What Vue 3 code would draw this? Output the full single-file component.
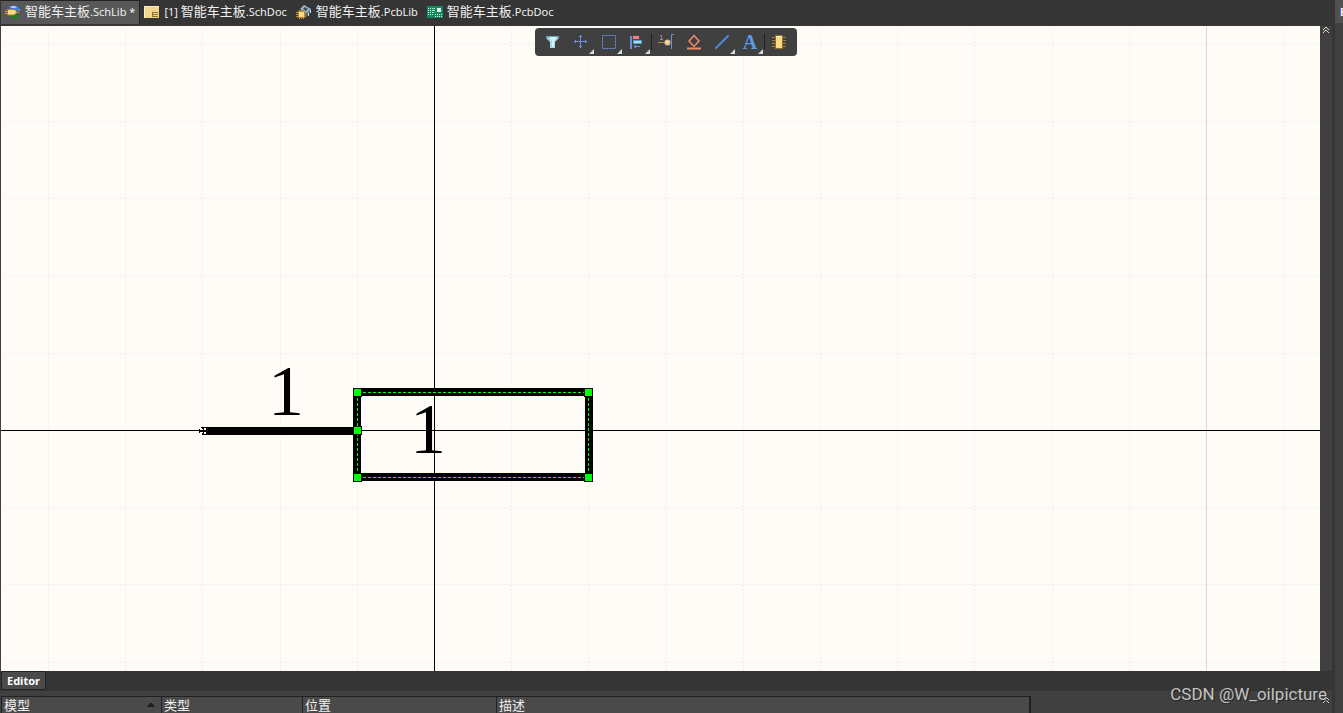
<script setup>
const tabs = [
  { icon: 'schlib', prefix: '', name: '智能车主板', ext: '.SchLib *', active: true },
  { icon: 'schdoc', prefix: '[1] ', name: '智能车主板', ext: '.SchDoc' },
  { icon: 'pcblib', prefix: '', name: '智能车主板', ext: '.PcbLib' },
  { icon: 'pcbdoc', prefix: '', name: '智能车主板', ext: '.PcbDoc' },
]

const tools = [
  { id: 'filter', label: 'Selection filter' },
  { id: 'move', label: 'Move', menu: true },
  { id: 'select', label: 'Select area', menu: true },
  { id: 'align', label: 'Align', menu: true, divider: true },
  { id: 'pin', label: 'Place pin' },
  { id: 'ieee', label: 'Place IEEE symbol' },
  { id: 'line', label: 'Place line', menu: true },
  { id: 'text', label: 'Place text', menu: true, divider: true },
  { id: 'part', label: 'Add part' },
]

const columns = [
  { key: 'model', label: '模型', sorted: true },
  { key: 'type', label: '类型' },
  { key: 'place', label: '位置' },
  { key: 'desc', label: '描述' },
]

// Grid lines relative to the sheet origin, 10 lines to 772 pixels
const pitch = 77.2
const steps = (from, to) =>
  Array.from({ length: to - from + 1 }, (_, i) => from + i).filter((n) => n !== 0 && n !== 10)
const gridX = steps(-5, 22).map((n) => Math.round(n * pitch))
const gridY = steps(-5, 12).map((n) => Math.round(n * pitch))

const handles = [
  [-77, -38],
  [-77, 0],
  [-77, 47],
  [154, -38],
  [154, 47],
]
</script>

<template>
  <div class="app">
    <main class="workspace">
      <nav class="tabs" aria-label="Documents">
        <button v-for="t in tabs" :key="t.icon" type="button" class="tab" :class="{ active: t.active }">
          <svg v-if="t.icon === 'schlib'" width="16" height="16" viewBox="0 0 16 16">
            <path d="M4 2h6q4 0 5 4l-1 1H5z" fill="#3f7fe0" />
            <path d="M6 2h4l2 2H6z" fill="#a9ceff" />
            <path d="M14 6h1" stroke="#a9ceff" />
            <path d="M6 10h7l1 3-1 1-1-1-1 3-2-2-2 1-2-2z" fill="#1f7a2b" />
            <path d="M2.500 5.500h6q3 0 3 2.500t-3 3h-6z" fill="#f6d98a" stroke="#a97f2c" />
            <path d="M0 7.500h2M0 9.500h2M12 8.500h2" stroke="#c9a24c" />
          </svg>
          <svg v-else-if="t.icon === 'schdoc'" width="16" height="16" viewBox="0 0 16 16">
            <rect x="0" y="2" width="15" height="12" fill="#f2d68b" />
            <path d="M0 2h15v1H0zM0 2h1v12H0z" fill="#fff0bf" />
            <path d="M8 8h6v5H8z" fill="#8f7034" />
            <path d="M9 9h5v1H9zM9 11h5v1H9z" fill="#f2d68b" />
          </svg>
          <svg v-else-if="t.icon === 'pcblib'" width="16" height="16" viewBox="0 0 16 16">
            <path d="M8 1l7 4-1 4-4 4-6-6z" fill="#516879" />
            <path d="M8 1l7 4-4 4-7-4z" fill="#9db2c2" />
            <path d="M9 3l3 2-2 2-3-2z" fill="#3c4e5c" />
            <path d="M12.500 9v3M14.500 6v3" stroke="#d5e2ea" />
            <path d="M0 8.500h10M0 10.500h10M0 12.500h10M3.500 6v9M5.500 6v9M7.500 6v9" stroke="#c19338" />
            <rect x="2.500" y="7.500" width="6" height="6" fill="#f8dc8c" stroke="#b98a2f" />
          </svg>
          <svg v-else width="16" height="16" viewBox="0 0 16 16">
            <rect x="0" y="2" width="16" height="12" fill="#0f8a58" />
            <path d="M1.500 4v1M1.500 6v1M1.500 8v1M1.500 10v1M3 4.500h1M3 6.500h1M3 8.500h1M3 10.500h1" stroke="#dff3e8" />
            <path d="M5 4.500h3M5 6.500h3M5 8.500h2M5 10.500h1" stroke="#a7dcc1" />
            <rect x="10" y="4" width="4" height="4" fill="#e6f4ec" />
            <path d="M8 10.500h1M10 10.500h1M12 10.500h1M14 10.500h1M8 12.500h1M10 12.500h1M12 12.500h1M14 12.500h1" stroke="#e6f4ec" />
          </svg>
          <span class="tab-text">{{ t.prefix }}<span class="cjk">{{ t.name }}</span>{{ t.ext }}</span>
        </button>
      </nav>

      <section class="middle">
        <div class="sheet">
          <svg class="drawing" role="img" aria-label="Symbol drawing">
            <g transform="translate(433 404)">
              <g transform="translate(0.5 0.5)">
                <g class="grid">
                  <line v-for="x in gridX" :key="'x' + x" :x1="x" :x2="x" y1="-401.5" y2="1000" />
                  <line v-for="y in gridY" :key="'y' + y" x1="-430.5" x2="1800" :y1="y" :y2="y" />
                </g>
                <line class="major" x1="772" x2="772" y1="-404" y2="1000" />
                <g class="axis">
                  <line x1="0" x2="0" y1="-500" y2="1000" />
                  <line x1="-500" x2="2000" y1="0" y2="0" />
                </g>
              </g>

              <rect class="bar" x="-232" y="-3" width="152" height="8" />
              <rect class="body" x="-77" y="-38" width="232" height="85" />
              <g class="guide" transform="translate(0.5 0.5)">
                <path d="M-77 -38H154M-77 47H154M-77 -38V47M154 -38V47" />
              </g>
              <g class="handles">
                <rect v-for="(h, i) in handles" :key="i" :x="h[0] - 4" :y="h[1] - 4" width="9" height="9" fill="#000" />
                <rect v-for="(h, i) in handles" :key="'g' + i" :x="h[0] - 3" :y="h[1] - 3" width="7" height="7" fill="#0f0" />
              </g>
              <path class="hotspot-dark" d="M-235 -1h1v4h-1zM-234 0h2v2h-2zM-233 -3h2v1h-2z" />
              <path class="hotspot" d="M-230 -2h2v2h-2zM-230 2h2v2h-2zM-232 -1h1v1h-1zM-232 2h1v1h-1z" />
              <text class="pin-text" x="-166" y="-15">1</text>
              <text class="pin-text" x="-24" y="23">1</text>
            </g>
          </svg>
        </div>
        <aside class="rail">
          <button type="button" class="chevron" aria-label="Collapse">
            <svg width="8" height="8" viewBox="0 0 8 8"><path d="M1 4l3-3 3 3M1 7l3-3 3 3" /></svg>
          </button>
        </aside>

        <div class="toolbar" role="toolbar" aria-label="Active bar">
          <button v-for="t in tools" :key="t.id" type="button" class="tool" :class="{ divider: t.divider }" :aria-label="t.label">
            <svg v-if="t.id === 'filter'" width="16" height="16" viewBox="0 0 16 16">
              <path d="M1 2h13v2l-4 4v6H5V8L1 4z" fill="#a9d7e8" />
              <path d="M1 2h13v2H1z" fill="#6ea3b8" /><path d="M4 3h8l-3 4v6H7V7z" fill="#d8f2fa" />
            </svg>
            <svg v-else-if="t.id === 'move'" width="16" height="16" viewBox="0 0 16 16" fill="none" stroke="#6a8fe0">
              <path d="M7.500 1v13M1 7.500h13M6 2.500h3M6 12.500h3M2.500 6v3M12.500 6v3" />
            </svg>
            <svg v-else-if="t.id === 'select'" width="16" height="16" viewBox="0 0 16 16">
              <rect x="1.500" y="1.500" width="13" height="13" fill="none" stroke="#6f92ea" stroke-dasharray="2 1" />
            </svg>
            <svg v-else-if="t.id === 'align'" width="16" height="16" viewBox="0 0 16 16">
              <path d="M1 2h2v13H1z" fill="#6a8fe0" />
              <path d="M4 2h6v3H4z" fill="#f08a8e" stroke="#c85359" stroke-width=".5" />
              <path d="M4.500 6.500h8v3h-8z" fill="#a8e0f5" stroke="#4b9ec0" />
              <path d="M5 12.500h6M7 11l-2 1.500 2 1.500" fill="none" stroke="#6a8fe0" />
            </svg>
            <svg v-else-if="t.id === 'pin'" width="16" height="16" viewBox="0 0 16 16" fill="none">
              <path d="M0 8.500h8" stroke="#b58b3f" />
              <path d="M2 1.500h1.500V6M2 5.500h3" stroke="#8d8d8d" />
              <path d="M16 .5h-2.500V15" stroke="#6a8fe0" />
              <circle cx="9.500" cy="8.500" r="3" fill="#e5c487" /><circle cx="9" cy="8" r="1" fill="#fff1ce" />
            </svg>
            <svg v-else-if="t.id === 'ieee'" width="16" height="16" viewBox="0 0 16 16" fill="none" stroke="#f08a66">
              <path d="M8 1.500l5 5.500-5 5.500L3 7z" stroke-width="1.500" /><path d="M1 14.500h14" stroke-width="2" />
            </svg>
            <svg v-else-if="t.id === 'line'" width="16" height="16" viewBox="0 0 16 16" stroke-linecap="round">
              <path d="M2 14L14 2" stroke="#4b8bdc" stroke-width="2" />
            </svg>
            <span v-else-if="t.id === 'text'" class="letter">A</span>
            <svg v-else width="16" height="16" viewBox="0 0 16 16">
              <path d="M1 3.500h14M1 6.500h14M1 9.500h14M1 12.500h14" stroke="#a28335" />
              <rect x="4" y="1" width="8" height="14" fill="#8f6d20" />
              <rect x="5" y="2" width="6" height="12" fill="#fbd986" />
              <path d="M5 2h6v1H5z" fill="#fff2c4" />
            </svg>
            <svg v-if="t.menu" class="corner" width="5" height="5" viewBox="0 0 5 5"><path d="M5 0v5H0z" fill="#d8d8d8" /></svg>
          </button>
        </div>
      </section>

      <div class="editor-bar">
        <button type="button" class="editor-tab">Editor</button>
      </div>

      <section class="models">
        <table class="model-table">
          <thead>
            <tr>
              <th v-for="c in columns" :key="c.key" :class="c.key" scope="col">
                <div class="head">
                  <span>{{ c.label }}</span>
                  <svg v-if="c.sorted" width="8" height="4" viewBox="0 0 8 4"><path d="M0 4l3-4h2l3 4z" fill="#1e1e1e" /></svg>
                </div>
              </th>
            </tr>
          </thead>
        </table>
        <button type="button" class="chevron low" aria-label="Expand">
          <svg width="8" height="8" viewBox="0 0 8 8"><path d="M1 4l3-3 3 3M1 7l3-3 3 3" /></svg>
        </button>
      </section>
    </main>

    <aside class="side">
      <div class="side-tab">
        <svg width="3" height="10" viewBox="0 0 3 10"><path d="M0 0h1v10H0z" fill="#3e7bd0" /><path d="M1 1h2v8H1z" fill="#e8e8e8" /><path d="M2 2h1v2H2zM2 6h1v2H2z" fill="#e6b75e" /></svg>
      </div>
    </aside>

    <div class="watermark">CSDN @W_oilpicture</div>
  </div>
</template>

<style>
body {
  margin: 0;
  overflow: hidden;
}
</style>

<style scoped>
.app {
  position: relative;
  display: flex;
  height: 100vh;
  overflow: hidden;
  background: #404040;
  color: #f0f0f0;
  font-family: "Noto Sans", "Noto Sans CJK SC", sans-serif;
}
button {
  margin: 0;
  padding: 0;
  border: 0;
  background: none;
  color: inherit;
  font: inherit;
}
svg {
  display: block;
  flex: none;
}
.workspace {
  flex: 1;
  min-width: 0;
  display: flex;
  flex-direction: column;
}
.tabs {
  display: flex;
  height: 26px;
  padding-left: 1px;
  background: #353535;
}
.tab {
  display: flex;
  align-items: center;
  gap: 4px;
  height: 24px;
  padding: 0 5px 1px 4px;
  font-size: 11px;
  white-space: pre;
}
.tab.active {
  padding: 0 4px 2px;
  background: #585858;
  border-right: 1px solid #222;
  border-top: 1px solid #222;
}
.tab-text {
  line-height: 20px;
}
.cjk {
  font-family: "Noto Sans CJK SC", sans-serif;
  font-size: 13px;
}
.middle {
  position: relative;
  flex: 1;
  min-height: 0;
  display: flex;
}
.sheet {
  flex: 1;
  min-width: 0;
  border-left: 1px solid #404040;
  background: #fffcf7;
}
.drawing {
  width: 100%;
  height: 100%;
}
.grid line {
  stroke: #efeeea;
  stroke-dasharray: 2 2;
}
.major {
  stroke: #d8dad6;
}
.axis line {
  stroke: #000;
}
.body {
  fill: none;
  stroke: #000;
  stroke-width: 8px;
}
.guide path {
  fill: none;
  stroke: #0f0;
  stroke-dasharray: 3 2;
  shape-rendering: crispEdges;
}
.hotspot {
  fill: #fff;
}
.pin-text {
  font-family: "Liberation Serif", serif;
  font-size: 72px;
}
.rail {
  width: 12px;
  background: #404040;
}
.chevron {
  display: block;
  padding: 0 2px;
}
.chevron path {
  fill: none;
  stroke: #ddd;
}
.toolbar {
  position: absolute;
  top: 2px;
  left: 50%;
  transform: translateX(-50%);
  display: flex;
  height: 28px;
  padding: 0 4px;
  border-radius: 4px;
  background: #404040;
}
.tool {
  position: relative;
  display: flex;
  align-items: center;
  justify-content: center;
  width: 28px;
  height: 28px;
}
.tool.divider {
  margin-right: 1px;
}
.tool.divider::after {
  content: "";
  position: absolute;
  right: -1px;
  top: 6px;
  width: 1px;
  height: 16px;
  background: #202020;
}
.corner {
  position: absolute;
  right: 1px;
  bottom: 2px;
}
.letter {
  color: #5b9ae8;
  font-family: "Liberation Serif", serif;
  font-size: 20px;
  font-weight: bold;
  line-height: 28px;
}
.editor-bar {
  display: flex;
  height: 20px;
  padding-left: 1px;
  background: #353535;
}
.editor-tab {
  height: 19px;
  padding: 0 5px;
  border: 1px solid #222;
  background: #4b4b4b;
  color: #fff;
  font-size: 11px;
  font-weight: bold;
  line-height: 17px;
}
.models {
  display: flex;
  align-items: flex-start;
  justify-content: space-between;
  height: 17px;
  padding: 5px 0 0 1px;
}
.model-table {
  width: 1030px;
  max-width: 90%;
  height: 18px;
  table-layout: fixed;
  border-collapse: collapse;
  border: 1px solid #202020;
  border-right-width: 2px;
  background: #4a4a4a;
}
th {
  padding: 0;
  font-family: "Noto Sans CJK SC", sans-serif;
  font-size: 13px;
  font-weight: normal;
  line-height: 16px;
  text-align: left;
}
.head {
  display: flex;
  align-items: center;
  justify-content: space-between;
  height: 15px;
  padding: 0 6px 1px 2px;
}
th + th .head {
  border-left: 1px solid #222;
}
.model {
  width: 159px;
}
.type {
  width: 141px;
}
.place {
  width: 194px;
}
.side {
  width: 8px;
  border-left: 3px solid #353535;
  background: #404040;
}
.side-tab {
  display: flex;
  align-items: center;
  justify-content: flex-end;
  height: 23px;
  background: #505050;
}
.watermark {
  position: absolute;
  right: 16px;
  bottom: 9px;
  color: #c4c4c4;
  font-family: Roboto, sans-serif;
  font-size: 17px;
  line-height: 20px;
  text-shadow: 1px 1px 1px #222;
}
</style>
